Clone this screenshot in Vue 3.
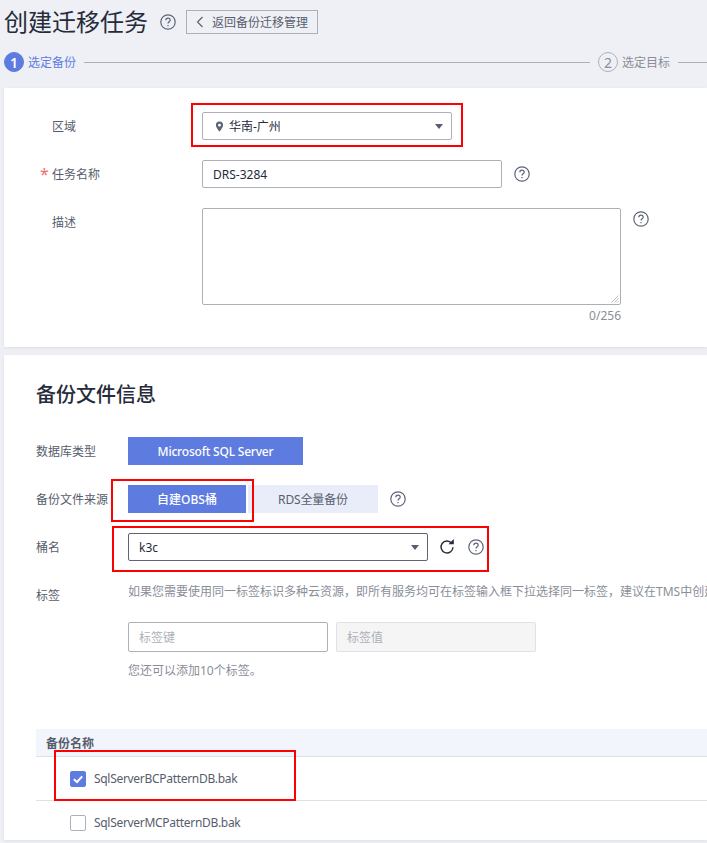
<script setup>
const hint = '如果您需要使用同一标签标识多种云资源，即所有服务均可在标签输入框下拉选择同一标签，建议在TMS中创建预定义标签。'
</script>

<template>
  <div class="page">
    <header class="head">
      <h1 class="title">创建迁移任务</h1>
      <svg class="help h-title" viewBox="0 0 16 16"><circle cx="8" cy="8" r="7.2"/><path d="M5.8 6.300C5.800 5 6.800 4.200 8 4.200s2.200.8 2.200 2c0 1.600-2.200 1.700-2.200 3.400"/><path d="M8 11v1.200"/></svg>
      <button class="back">
        <svg class="chev" viewBox="0 0 8 12"><path d="M6.500 1 1.500 6l5 5"/></svg>
        <span>返回备份迁移管理</span>
      </button>
    </header>

    <div class="steps">
      <span class="dot on">1</span><span class="st on">选定备份</span>
      <span class="line"></span>
      <span class="dot">2</span><span class="st">选定目标</span>
      <span class="line tail"></span>
    </div>

    <section class="card first">
      <div class="row r1">
        <label class="lab">区域</label>
        <div class="field sel w250">
          <svg class="pin" viewBox="0 0 10 12"><path d="M5 .5A4 4 0 0 0 1 4.500c0 2.800 4 7 4 7s4-4.200 4-7a4 4 0 0 0-4-4Zm0 5.600a1.600 1.600 0 1 1 0-3.200 1.600 1.600 0 0 1 0 3.200Z"/></svg>
          <span class="val zh">华南-广州</span>
          <i class="caret"></i>
          <span class="red rb1"></span>
        </div>
      </div>
      <div class="row r2">
        <label class="lab"><em>*</em>任务名称</label>
        <div class="field w300"><span class="val">DRS-3284</span></div>
        <svg class="help h-name" viewBox="0 0 16 16"><circle cx="8" cy="8" r="7.200"/><path d="M5.800 6.300C5.800 5 6.800 4.200 8 4.200s2.200.8 2.200 2c0 1.600-2.200 1.700-2.200 3.400"/><path d="M8 11v1.200"/></svg>
      </div>
      <div class="row r3">
        <label class="lab lab-top">描述</label>
        <div class="area-wrap">
          <div class="area">
            <svg class="grip" viewBox="0 0 8 8"><path d="M7.500.5.500 7.500M7.500 3.500l-4 4M7.500 6l-1.500 1.500"/></svg>
          </div>
          <div class="count">0/256</div>
        </div>
        <svg class="help h-desc" viewBox="0 0 16 16"><circle cx="8" cy="8" r="7.200"/><path d="M5.800 6.300C5.800 5 6.800 4.200 8 4.200s2.200.8 2.200 2c0 1.600-2.200 1.700-2.200 3.400"/><path d="M8 11v1.200"/></svg>
      </div>
    </section>

    <section class="card second">
      <h2 class="sub">备份文件信息</h2>

      <div class="frow f1">
        <label class="flab">数据库类型</label>
        <button class="btn active w175 sql">Microsoft SQL Server</button>
      </div>

      <div class="frow f2">
        <label class="flab">备份文件来源</label>
        <button class="btn active w118">自建OBS桶<span class="red rb2"></span></button>
        <button class="btn plain w130">RDS全量备份</button>
        <svg class="help h-src" viewBox="0 0 16 16"><circle cx="8" cy="8" r="7.200"/><path d="M5.800 6.300C5.800 5 6.800 4.200 8 4.200s2.200.8 2.200 2c0 1.600-2.200 1.700-2.200 3.400"/><path d="M8 11v1.200"/></svg>
      </div>

      <div class="frow f3">
        <label class="flab">桶名</label>
        <div class="bucket">
          <div class="field sel dark w300">
            <span class="val">k3c</span>
            <i class="caret"></i>
          </div>
          <svg class="refresh" viewBox="0 0 16 16"><path d="M12.700 4.200A6 6 0 1 0 14 8.200"/><path class="fill" d="M9.500 5.200h5.300V0z"/></svg>
          <svg class="help h-bucket" viewBox="0 0 16 16"><circle cx="8" cy="8" r="7.200"/><path d="M5.800 6.300C5.800 5 6.800 4.200 8 4.200s2.200.8 2.200 2c0 1.600-2.200 1.700-2.200 3.400"/><path d="M8 11v1.200"/></svg>
          <span class="red rb3"></span>
        </div>
      </div>

      <div class="frow f4">
        <label class="flab tag">标签</label>
        <div class="tags">
          <p class="hint">{{ hint }}</p>
          <div class="tag-inputs">
            <div class="tinput">标签键</div>
            <div class="tinput off">标签值</div>
          </div>
          <p class="note">您还可以添加10个标签。</p>
        </div>
      </div>

      <div class="table">
        <div class="thead">备份名称</div>
        <div class="trow t1">
          <span class="check on"><svg viewBox="0 0 16 16"><path d="M3.800 8.200 7 11l5.200-5.600"/></svg></span>
          <span class="fname">SqlServerBCPatternDB.bak</span>
          <span class="red rb4"></span>
        </div>
        <div class="trow t2">
          <span class="check"></span>
          <span class="fname">SqlServerMCPatternDB.bak</span>
        </div>
      </div>
    </section>
  </div>
</template>

<style>
html, body { margin: 0; background: #eef0f5; overflow: hidden; }
</style>

<style scoped>
* { box-sizing: border-box; }
.page {
  width: 707px; height: 843px; overflow: hidden; padding-left: 4px;
  background: #eef0f5; color: #575d6c;
  font-family: "Noto Sans", "Noto Sans CJK SC", sans-serif; font-size: 12px;
}
.head { height: 44px; display: flex; align-items: center; }
.title { margin: 0; font-size: 24px; font-weight: 400; color: #252b3a; line-height: 44px; width: 144px; white-space: nowrap; }
.help { width: 16px; height: 16px; flex: none; fill: none; stroke: #5d6477; stroke-width: 1.200; }
.h-title { margin-left: 12px; }
.back {
  margin-left: 10px; width: 132px; height: 24px; padding: 0 0 0 9px;
  display: flex; align-items: center; gap: 8px; font: inherit; color: #575d6c;
  background: transparent; border: 1px solid #adb0b8; white-space: nowrap;
}
.chev { width: 8px; height: 12px; fill: none; stroke: #575d6c; stroke-width: 1.100; }
.steps { height: 44px; display: flex; align-items: center; color: #8a8e99; padding-bottom: 8px; }
.dot {
  width: 20px; height: 20px; border-radius: 50%; border: 1px solid #adb0b8; flex: none;
  display: flex; align-items: center; justify-content: center; font-size: 14px; color: #8a8e99;
}
.dot.on { background: #5e7ce0; border-color: #5e7ce0; color: #fff; font-weight: 600; }
.st { margin-left: 4px; width: 48px; white-space: nowrap; flex: none; }
.st.on { color: #5e7ce0; }
.line { flex: 1; height: 1px; background: #adb0b8; margin: 0 8px; }
.line.tail { flex: 0 0 29px; margin-right: 0; }

.card { background: #fff; box-shadow: 0 1px 3px rgba(37,43,58,.08); }
.first { height: 259px; padding-top: 24px; }
.row { display: flex; }
.r1 { height: 28px; align-items: center; }
.r2 { height: 28px; margin-top: 20px; align-items: center; }
.r3 { margin-top: 20px; align-items: flex-start; }
.lab { width: 198px; padding-left: 48px; position: relative; color: #575d6c; white-space: nowrap; flex: none; }
.lab em { position: absolute; left: 36px; top: 1px; font-style: normal; color: #f66f6a; font-size: 16px; line-height: 16px; }
.lab-top { padding-top: 5px; }
.field {
  position: relative; height: 28px; display: flex; align-items: center; padding-left: 10px;
  border: 1px solid #adb0b8; border-radius: 2px; background: #fff; color: #252b3a; flex: none;
}
.w250 { width: 250px; }
.w300 { width: 300px; }
.dark { border-color: #5e6475; }
.val { white-space: nowrap; }
.pin { width: 9px; height: 11px; fill: #5d6477; margin: 0 5px 0 2px; }
.caret {
  position: absolute; right: 8px; top: 11px; width: 0; height: 0;
  border-left: 4.500px solid transparent; border-right: 4.500px solid transparent; border-top: 5px solid #575d6c;
}
.h-name { margin-left: 12px; }
.area-wrap { width: 419px; flex: none; }
.area { position: relative; height: 97px; border: 1px solid #adb0b8; border-radius: 2px; }
.grip { position: absolute; right: 1px; bottom: 1px; width: 8px; height: 8px; fill: none; stroke: #adb0b8; stroke-width: .8; }
.count { text-align: right; color: #8a8e99; line-height: 22px; }
.h-desc { margin: 3px 0 0 12px; }

.second { height: 485px; margin-top: 8px; padding: 0 0 0 32px; }
.sub { margin: 0; padding-top: 26px; height: 82px; font-size: 20px; line-height: 28px; font-weight: 500; color: #252b3a; }
.frow { display: flex; align-items: center; }
.flab { width: 92px; flex: none; white-space: nowrap; color: #575d6c; }
.f1, .f2, .f3 { height: 28px; }
.f2 { margin-top: 20px; }
.f3 { margin-top: 20px; }
.btn { height: 28px; border: 0; padding: 0; flex: none; font: inherit; white-space: nowrap; }
.btn.active { position: relative; background: #5e7ce0; color: #fff; font-weight: 500; }
.btn.plain { background: #e9edfa; color: #575d6c; margin-left: 2px; letter-spacing: -.15px; }
.sql { letter-spacing: -.2px; }
.w175 { width: 175px; }
.w118 { width: 118px; }
.w130 { width: 130px; }
.h-src { margin-left: 12px; }
.bucket { position: relative; display: flex; align-items: center; }
.refresh { width: 16px; height: 16px; margin-left: 11px; fill: none; stroke: #252b3a; stroke-width: 1.400; }
.refresh .fill { fill: #252b3a; stroke: none; }
.h-bucket { margin-left: 13px; }
.f4 { margin-top: 20px; align-items: flex-start; }
.flab.tag { padding-top: 5px; }
.tags { min-width: 0; flex: none; width: 600px; }
.hint { margin: 0; padding-top: 1px; color: #8a8e99; white-space: nowrap; line-height: 20px; }
.tag-inputs { display: flex; gap: 8px; margin-top: 20px; }
.tinput {
  width: 200px; height: 30px; border: 1px solid #adb0b8; border-radius: 2px; padding-left: 10px;
  display: flex; align-items: center; color: #adb0b8;
}
.tinput.off { background: #f5f5f6; border-color: #dfe1e6; }
.note { margin: 9px 0 0; color: #8a8e99; line-height: 20px; }
.table { margin-top: 48px; }
.thead {
  height: 28px; padding: 5px 0 0 10px; background: #f2f5fc; border-bottom: 1px solid #dfe1e6;
  font-weight: 700; color: #575d6c; line-height: 20px;
}
.trow { position: relative; height: 44px; display: flex; align-items: center; padding-left: 34px; border-bottom: 1px solid #dfe1e6; }
.t2 { border-bottom: 0; height: 40px; padding-top: 3px; }
.fname { letter-spacing: -.3px; }
.check { width: 16px; height: 16px; flex: none; margin-right: 8px; border: 1px solid #adb0b8; border-radius: 2px; background: #fff; }
.check.on { background: #5e7ce0; border-color: #5e7ce0; position: relative; }
.check svg { position: absolute; inset: -1px; width: 16px; height: 16px; fill: none; stroke: #fff; stroke-width: 2; }

.red { position: absolute; border: 2px solid #f00; pointer-events: none; }
.rb1 { left: -12px; top: -10px; width: 272px; height: 44px; }
.rb2 { left: -17px; top: -6px; width: 143px; height: 43px; }
.rb3 { left: -16px; top: -7px; width: 377px; height: 46px; }
.rb4 { left: 18px; top: -7px; width: 242px; height: 51px; }
</style>
